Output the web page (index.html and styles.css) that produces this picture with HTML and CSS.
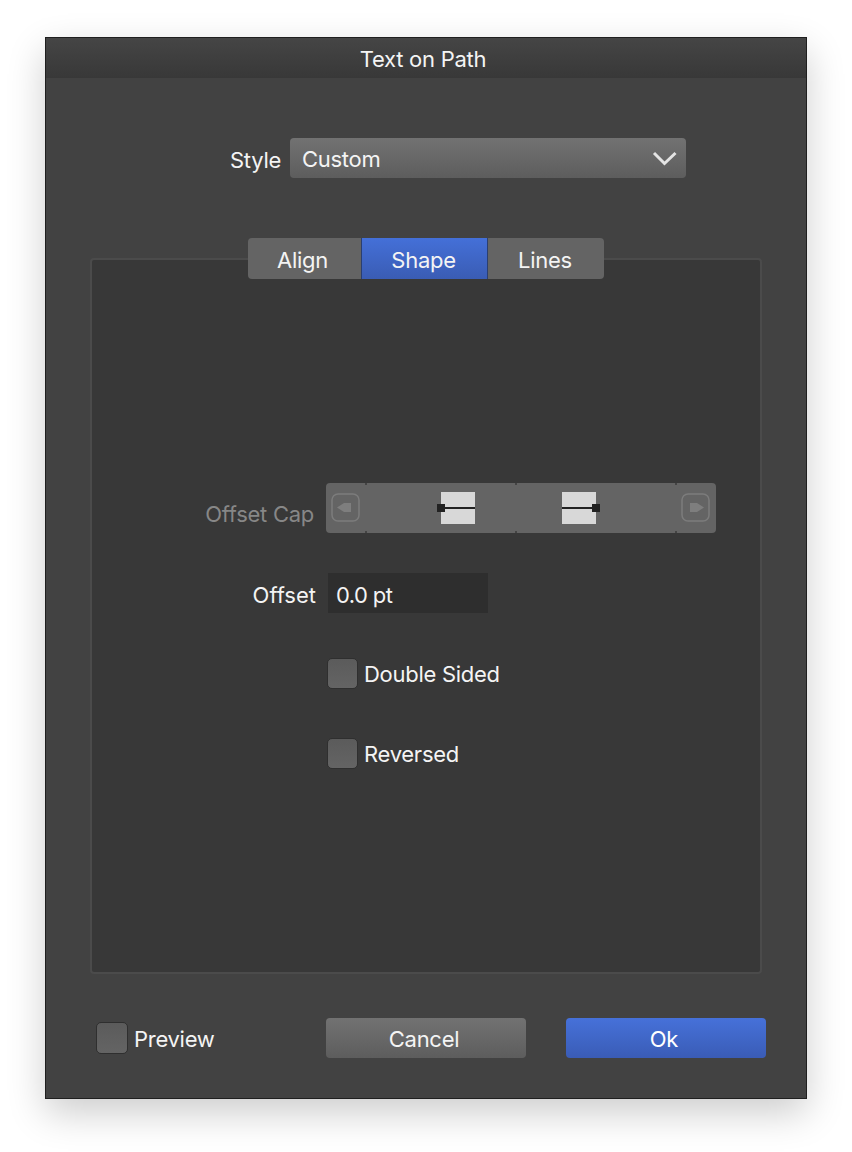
FILE: index.html
```html
<!DOCTYPE html>
<html lang="en">
<head>
<meta charset="utf-8">
<title>Text on Path</title>
<link rel="stylesheet" href="styles.css">
</head>
<body>
<div class="window">
  <header class="titlebar">Text on Path</header>
  <div class="content">
    <div class="style-row">
      <span class="style-label">Style</span>
      <div class="select">
        <span class="select-text">Custom</span>
        <svg class="chevron" width="26" height="16" viewBox="0 0 26 16"><path d="M2 3 L12.5 13.5 L23.5 3" fill="none" stroke="#e4e4e4" stroke-width="3"/></svg>
      </div>
    </div>
    <div class="tabs">
      <div class="tab tab-first">Align</div>
      <div class="tab tab-active">Shape</div>
      <div class="tab tab-last">Lines</div>
    </div>
    <section class="panel">
      <div class="cap-row">
        <span class="cap-label">Offset Cap</span>
        <div class="segments">
          <div class="seg seg-arrow seg-start">
            <svg width="30" height="30" viewBox="0 0 30 30"><rect x="1" y="1" width="27" height="27" rx="6" fill="none" stroke="#7c7c7c" stroke-width="1.5"/><path d="M6 14.5 L13 10 H20 V19 H13 Z" fill="#7e7e7e"/></svg>
          </div>
          <div class="seg seg-mid">
            <svg width="42" height="32" viewBox="0 0 42 32"><rect x="4" y="0" width="34" height="32" fill="#d8d8d8"/><rect x="4" y="15" width="34" height="2" fill="#222"/><rect x="0" y="12" width="8" height="8" fill="#222"/></svg>
          </div>
          <div class="seg seg-wide">
            <svg width="42" height="32" viewBox="0 0 42 32"><rect x="4" y="0" width="34" height="32" fill="#d8d8d8"/><rect x="4" y="15" width="34" height="2" fill="#222"/><rect x="34" y="12" width="8" height="8" fill="#222"/></svg>
          </div>
          <div class="seg seg-arrow seg-end">
            <svg width="30" height="30" viewBox="0 0 30 30"><rect x="1" y="1" width="27" height="27" rx="6" fill="none" stroke="#7c7c7c" stroke-width="1.5"/><path d="M9 10 H16 L23 14.5 L16 19 H9 Z" fill="#7e7e7e"/></svg>
          </div>
        </div>
      </div>
      <div class="offset-row">
        <span class="offset-label">Offset</span>
        <div class="input">0.0 pt</div>
      </div>
      <label class="check check-double"><span class="box"></span><span>Double Sided</span></label>
      <label class="check check-reversed"><span class="box"></span><span>Reversed</span></label>
    </section>
    <footer class="footer">
      <label class="check check-preview"><span class="box box-large"></span><span class="preview-text">Preview</span></label>
      <div class="buttons">
        <div class="btn btn-cancel">Cancel</div>
        <div class="btn btn-ok">Ok</div>
      </div>
    </footer>
  </div>
</div>
</body>
</html>
```
FILE: styles.css
```css
* { box-sizing: border-box; }
html, body { margin: 0; height: 100%; }
body {
  background: #fff;
  font-family: Inter, "Noto Sans", sans-serif;
  font-size: 22px;
  letter-spacing: -0.28px;
  color: #f4f4f4;
  padding: 37px 45px 0;
  overflow: hidden;
}
.window {
  width: 762px;
  height: 1062px;
  background: #424242;
  border: 1px solid #1f1f1f;
  box-shadow: 0 14px 36px rgba(0,0,0,.2);
  display: flex;
  flex-direction: column;
}
.titlebar {
  height: 40px;
  flex: none;
  background: linear-gradient(#454545, #383838);
  display: flex;
  align-items: center;
  justify-content: center;
  padding: 2px 6px 0 0;
}
.content {
  flex: 1;
  display: flex;
  flex-direction: column;
  padding: 60px 44px 0;
}
.style-row { display: flex; align-items: center; padding-left: 96px; height: 40px; }
.style-label { width: 104px; text-align: right; padding-right: 9px; padding-top: 3px; }
.select {
  width: 396px;
  height: 40px;
  border-radius: 4px;
  background: linear-gradient(#727272, #5d5d5d);
  display: flex;
  align-items: center;
  justify-content: space-between;
  padding: 0 8px 0 12px;
}
.select-text { padding-top: 2px; }
.tabs {
  display: flex;
  align-self: flex-start;
  margin: 60px 0 -21px 158px;
  position: relative;
  z-index: 1;
  height: 41px;
  border-radius: 4px;
  overflow: hidden;
}
.tab {
  background: #646464;
  display: flex;
  align-items: center;
  justify-content: center;
  padding: 2px 2px 0 0;
}
.tab-first { width: 113px; padding-right: 4px; }
.tab-active { width: 127px; background: linear-gradient(#4470d8, #3a5cb4); border-left: 1px solid #2b3f70; border-right: 1px solid #2b3f70; }
.tab-last { width: 116px; }
.panel {
  height: 716px;
  background: #383838;
  border: 2px solid #4b4b4b;
  border-radius: 4px;
  padding-top: 223px;
  display: flex;
  flex-direction: column;
  flex: none;
}
.cap-row { display: flex; align-items: center; height: 50px; }
.cap-label { width: 222px; text-align: right; color: #878787; padding-top: 12px; }
.segments { display: flex; margin-left: 12px; height: 50px; }
.seg {
  position: relative;
  background: #646464;
  display: flex;
  align-items: center;
  justify-content: center;
}
.seg-mid::before, .seg-mid::after, .seg-wide::before, .seg-wide::after, .seg-end::before, .seg-end::after {
  content: "";
  position: absolute;
  left: -1px;
  width: 2px;
  height: 2px;
  background: #444;
}
.seg-mid::before, .seg-wide::before, .seg-end::before { top: 0; }
.seg-mid::after, .seg-wide::after, .seg-end::after { bottom: 0; }
.seg-arrow { width: 40px; }
.seg-start { border-radius: 4px 0 0 4px; }
.seg-end { border-radius: 0 4px 4px 0; }
.seg-mid { width: 150px; padding-left: 34px; }
.seg-wide { width: 160px; padding-right: 34px; }
.offset-row { display: flex; align-items: center; height: 40px; margin-top: 40px; }
.offset-label { width: 224px; text-align: right; padding-top: 3px; letter-spacing: 0; }
.input {
  width: 160px;
  height: 40px;
  margin-left: 12px;
  background: #2e2e2e;
  display: flex;
  align-items: center;
  padding: 3px 0 0 8px;
  letter-spacing: -0.6px;
}
.check { display: flex; align-items: center; gap: 6px; }
.check-double { margin: 45px 0 0 235px; }
.check-reversed { margin: 49px 0 0 235px; }
.box {
  width: 31px;
  height: 31px;
  border-radius: 5px;
  background: linear-gradient(#5b5b5b, #646464);
  border: 1px solid #2f2f2f;
  flex: none;
}
.box-large { width: 32px; height: 32px; }
.preview-text { padding-top: 1px; }
.footer {
  display: flex;
  justify-content: space-between;
  align-items: center;
  height: 40px;
  margin-top: 44px;
  padding-left: 6px;
}
.buttons { display: flex; gap: 40px; margin-right: -4px; }
.btn {
  width: 200px;
  height: 40px;
  border-radius: 4px;
  display: flex;
  align-items: center;
  justify-content: center;
  padding: 2px 4px 0 0;
}
.btn-cancel { background: linear-gradient(#727272, #5d5d5d); }
.btn-ok { background: linear-gradient(#4671d9, #3a5cb6); color: #fff; }
```
